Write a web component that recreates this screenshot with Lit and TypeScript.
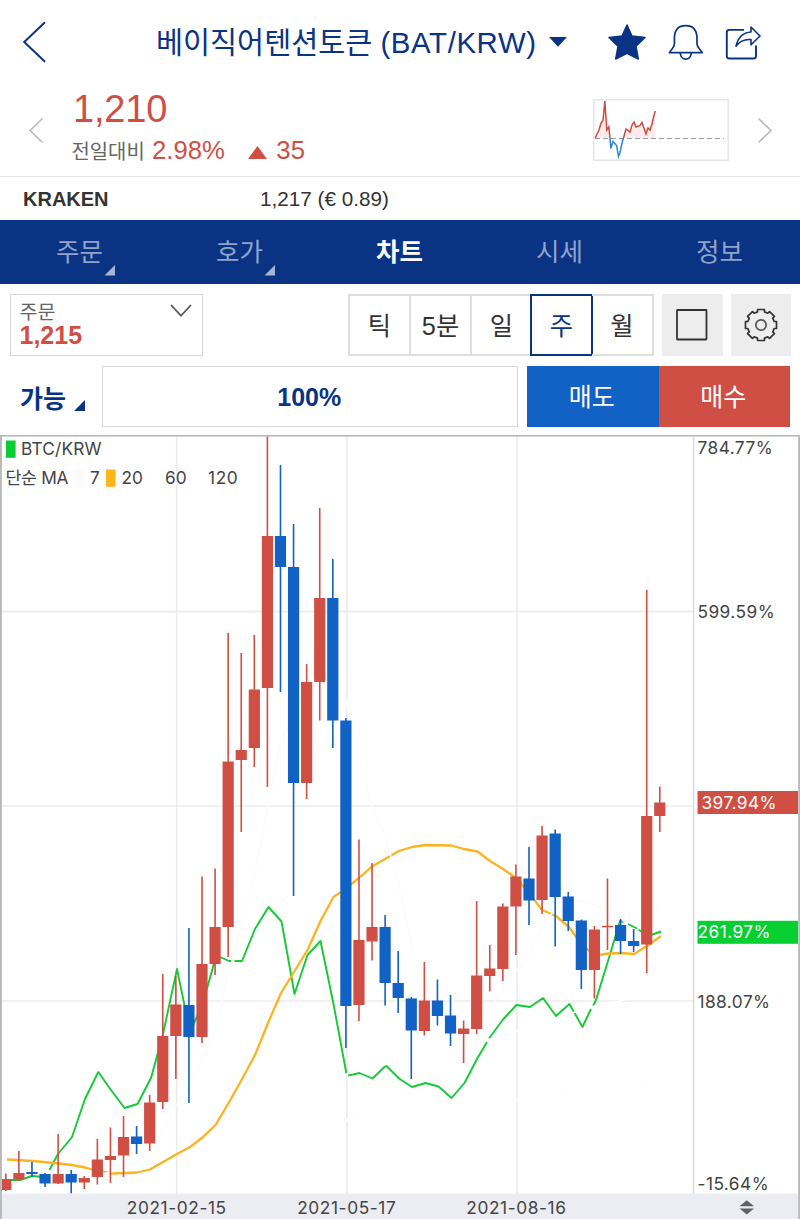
import { LitElement, html, css, svg } from "lit";
import { customElement, property } from "lit/decorators.js";
import { classMap } from "lit/directives/class-map.js";

type Candle = [dir: "u" | "d", high: number, top: number, bottom: number, low: number];

const CANDLES: Candle[] = [
  ["u", 1173.5, 1179, 1190, 1191], ["u", 1151, 1173, 1179.5, 1181], ["d", 1162, 1172, 1174, 1177],
  ["d", 1173, 1174, 1183.5, 1187], ["u", 1134, 1174, 1183.5, 1184], ["d", 1170, 1174, 1182.5, 1193.5],
  ["u", 1176, 1178, 1182.5, 1189], ["u", 1139, 1159.5, 1177, 1184.5], ["u", 1127.5, 1156, 1160, 1183],
  ["u", 1116, 1137, 1155.5, 1177], ["d", 1126, 1136.5, 1144, 1154], ["u", 1095, 1102.5, 1143.5, 1151],
  ["u", 974, 1036, 1102, 1109], ["u", 976, 1004.5, 1036, 1079], ["d", 928, 1005, 1037, 1103],
  ["u", 876.5, 964, 1037, 1043], ["u", 868.5, 927, 964, 975], ["u", 633, 761.5, 927, 957],
  ["u", 653, 750, 760, 832], ["u", 635, 689.5, 748, 767], ["u", 436, 536, 688, 787],
  ["d", 465, 536, 567, 692], ["d", 524, 567, 783, 896], ["u", 664, 682, 783, 799],
  ["u", 508, 598, 682, 720.5], ["d", 559, 598, 720.5, 748], ["d", 718, 720.5, 1006, 1048],
  ["u", 839.5, 940, 1005, 1021], ["u", 863, 927, 941.5, 960.5], ["d", 915, 927, 983, 1005.5],
  ["d", 951, 983, 998, 1013], ["d", 997, 998.5, 1030.5, 1079], ["u", 962, 1000.5, 1031, 1035.5],
  ["d", 979.5, 1000.5, 1016, 1025.5], ["d", 995, 1015.5, 1033.5, 1046], ["u", 1020.5, 1028.5, 1034, 1063],
  ["u", 901, 975.5, 1029, 1034], ["u", 945, 968.5, 976, 991.5], ["u", 903.5, 906.5, 969, 981],
  ["u", 864.5, 876.5, 906.5, 955], ["d", 847, 878.5, 900.5, 925], ["u", 826, 835.5, 900, 914],
  ["d", 829.5, 833.5, 897, 946.5], ["d", 892, 896.5, 921, 931], ["d", 919.5, 920.5, 970, 989],
  ["u", 926, 929.5, 970, 998.5], ["u", 878.5, 925.8, 927.2, 950], ["d", 919, 925, 941, 954],
  ["d", 929, 941, 946, 952], ["u", 590, 816, 944.5, 973], ["u", 786.5, 802.5, 816, 832],
];

const candleX = (i: number) => 5.8 + i * 13.08;

const MA20 =
  "7,1159.5 33,1161 59,1163.5 72,1165 85,1167.5 98,1171 112,1173.5 137,1172.5 150,1169.5 163,1162 177,1154 190,1147 203,1137 215.5,1125 228,1104 241,1081 255,1055 268,1023 281,993 294,972 308,949 320.5,921 333.5,897 341,892 359,878 372,866.5 385,859 399,851 412,847 425,845 451,845.5 464,849 477.5,851.5 490,861 503,869 516,878 529,893 542,910 556,916 569,927 582,945 595,955.5 608,953.5 621,953 634,954 647,946 661,936";
const BTC = [
  "5,1180 20,1180 32,1176 45,1177",
  "49.5,1170 58,1154 72,1137 85,1099 98.3,1072 111,1090 124.5,1108 137.5,1104 151,1078 163,1034 177,969 190,1032 203,1003 216,956 221,957.5 229,961 232,961",
  "234.5,961 242,961 255,929 268.5,907 281.5,921.5 294.5,994 307.5,955 320.5,941 333.5,1004 346.5,1074",
  "348,1075.5 359.5,1073 372.5,1078.5 386,1065.5 399,1078.5 412,1087 425.5,1083 438.5,1086.5 451.5,1098 464.5,1083 477,1059 487,1042",
  "489,1038.5 503,1019.5 516.5,1005 530,1007 543,998 556,1016 569.5,1004 582.5,1027 591,1009",
  "593,1006 596,1000 608,961 620,921 624,922",
  "628,924 637,928.5 648,936 661,931.5",
];

const sma = (n: number) => {
  const closes = CANDLES.map(([d, , t, b]) => (d === "u" ? t : b));
  return closes
    .map((_, i) => (i < n - 1 ? "" : `${candleX(i)},${closes.slice(i - n + 1, i + 1).reduce((a, b) => a + b) / n}`))
    .filter(Boolean)
    .join(" ");
};

@customElement("weekly-chart")
class WeeklyChart extends LitElement {
  static styles = css`
    :host { display: block; }
    svg { display: block; font-family: Inter, "Noto Sans CJK KR", sans-serif; font-size: 17.3px; fill: #444; }
    .grid { stroke: #ececec; stroke-width: 1.6; }
    .frame { fill: #b9b9b9; }
    .axis { fill: #ecedf2; }
    .u { fill: #d04f45; }
    .d { fill: #1261c4; }
    .line { fill: none; stroke-width: 1.9; stroke-linejoin: round; }
    .btc { stroke: #15c937; }
    .ma20 { stroke: #fbb420; stroke-width: 2.3; }
    .faint { stroke: #fcfcfc; stroke-width: 1.8; }
    .fainter { stroke: #fefefe; }
    .price { letter-spacing: 0.45px; }
    .tag { fill: #fff; }
    .green { fill: #06cf31; }
    .orange { fill: #fdb61a; }
    .pale { fill: #fbfbfb; }
    .scale { fill: #606164; }
    .date { font-size: 17.3px; letter-spacing: 0.6px; }
  `;

  render() {
    return html`<svg width="800" height="784" viewBox="0 435 800 784">
      <g class="grid">
        ${[176.7, 346.9, 517].map((x) => svg`<line x1=${x} x2=${x} y1="436" y2="1194" />`)}
        ${[611.6, 806, 1001].map((y) => svg`<line x1="2" x2="693" y1=${y} y2=${y} />`)}
      </g>
      <rect x="692.8" y="436" width="1.6" height="758" fill="#dcdcdc" />
      ${BTC.map((p) => svg`<polyline class="line btc" points=${p} />`)}
      <polyline class="line ma20" points=${MA20} />
      <polyline class="line faint" points=${sma(7)} />
      <polyline class="line faint fainter" points="330,1078 487,1040 517,1031 575,1012 591,1007 620,1001 661,990" />
      <polyline class="line faint fainter" points="330,1122 347,1120 517,1100 661,1085" />
      ${CANDLES.map(([dir, hi, top, bottom, lo], i) => {
        const x = candleX(i);
        const left = Math.max(2, x - 5.6);
        return svg`<g class=${dir}>
          <rect x=${x - 0.8} y=${hi} width="1.6" height=${lo - hi} />
          <rect x=${left} y=${top} width=${x + 5.6 - left} height=${bottom - top} />
        </g>`;
      })}
      <rect class="axis" x="0" y="1193.6" width="800" height="26" />
      <rect class="frame" x="0" y="435" width="800" height="1.6" />
      <rect class="frame" x="0" y="435" width="1.9" height="784" />
      <rect class="frame" x="798.2" y="435" width="1.8" height="784" />

      <rect class="green" x="6" y="440.5" width="9.6" height="17.3" />
      <text x="21" y="455" letter-spacing=".15">BTC/KRW</text>
      <text x="5.5" y="484" letter-spacing="-.3">단순 MA</text>
      <rect class="pale" x="75" y="469.5" width="9.6" height="17.3" />
      <text x="90" y="484">7</text>
      <rect class="orange" x="106" y="469.5" width="9.6" height="17.3" />
      <text x="121.5" y="484">20</text>
      <text x="165" y="484">60</text>
      <text x="208" y="484" letter-spacing=".6">120</text>

      <rect class="u" x="697.5" y="791" width="100.5" height="23" />
      <rect class="green" x="697.5" y="920.8" width="100.5" height="23" />
      <g class="price">
        <text x="697.5" y="454">784.77%</text>
        <text x="697.5" y="618">599.59%</text>
        <text class="tag" x="701.5" y="809">397.94%</text>
        <text class="tag" x="697.5" y="938">261.97%</text>
        <text x="697.5" y="1007.5">188.07%</text>
        <text x="697.5" y="1190">-15.64%</text>
      </g>
      <text class="date" x="126.8" y="1214">2021-02-15</text>
      <text class="date" x="297.2" y="1214">2021-05-17</text>
      <text class="date" x="466.3" y="1214">2021-08-16</text>
      <path class="scale" d="M739.5 1206.3L746.8 1200.3L754 1206.3ZM739.5 1208.4H754L746.8 1214.6Z" />
    </svg>`;
  }
}

@customElement("quote-header")
class QuoteHeader extends LitElement {
  static styles = css`
    :host { display: block; height: 220px; }
    svg { display: block; flex: none; }
    .bar { display: flex; align-items: center; height: 84px; padding-left: 22px; color: #0a3384; }
    .title { margin-left: 109px; width: 383px; font-size: 29.4px; line-height: 40px; white-space: nowrap; padding-top: 2px; }
    .pair { letter-spacing: 0.6px; }
    .caret { margin-left: 10px; }
    .star { margin-left: 41px; }
    .bell { margin-left: 22px; }
    .share { margin-left: 21px; }
    .quote { display: flex; height: 92px; border-bottom: 1.5px solid #e8e8e8; box-sizing: content-box; }
    .prev { margin: 33px 0 0 28px; }
    .numbers { margin-left: 27.5px; width: 521.5px; color: #d04f45; }
    .price { font-size: 38px; line-height: 44px; padding: 3px 0 0 1.5px; letter-spacing: -0.2px; }
    .change { display: flex; align-items: baseline; font-size: 25.7px; line-height: 36px; padding-top: 0.5px; }
    .label { font-size: 19.9px; color: #666; width: 80.5px; }
    .arrow { margin: 0 9px 0 23.5px; }
    .thumb { margin-top: 15px; }
    .next { margin: 33px 0 0 28px; }
    .foreign { display: flex; height: 42.5px; line-height: 44px; font-size: 20.7px; color: #333; padding-left: 23px; }
    .market { width: 237px; font-weight: bold; font-size: 20px; }
  `;

  render() {
    return html`
      <div class="bar">
        <svg width="25" height="42" viewBox="0 0 25 42" fill="none" stroke="#0a3384" stroke-width="2"><path d="M23 1.2L2.2 21L23 40.8" /></svg>
        <div class="title">베이직어텐션토큰 <span class="pair">(BAT/KRW)</span></div>
        <svg class="caret" width="18" height="10" viewBox="0 0 18 10"><path d="M0 0H18L9 9.7Z" fill="#0a3384" /></svg>
        <svg class="star" width="38" height="36" viewBox="0 0 38 36"><path d="M19 1L24 12L37 13.5L28 22.3L30.3 35L19 29.3L7.7 35L10 22.3L1 13.5L14 12Z" fill="#0a3384" stroke="#0a3384" stroke-width="1.5" stroke-linejoin="round" /></svg>
        <svg class="bell" width="36" height="37" viewBox="0 0 36 37" fill="none" stroke="#0a3384" stroke-width="1.7" stroke-linejoin="round">
          <path d="M17.7 1.7C10 1.7 6.6 7 6.4 14V20C6.2 24 3 25.6 1.4 28.7H34.2C32.8 25.6 29.2 24 29 20V14C28.8 7 25.4 1.7 17.7 1.7Z" />
          <path d="M12.2 29C12.8 37.2 22.8 37.2 23.3 29" />
        </svg>
        <svg class="share" width="37" height="37" viewBox="0 0 37 37" fill="none" stroke="#0a3384" stroke-width="1.9" stroke-linejoin="round">
          <path d="M19 5.9H4.3Q1.8 5.9 1.8 8.4V32Q1.8 34.5 4.3 34.5H28.5Q31 34.5 31 32V21.5" />
          <path d="M11 22.2C13 13.5 18 8.5 26 8V3L35 12L26 20.8V15.6C20 15 15.2 16.8 11 22.2Z" stroke-width="1.6" />
        </svg>
      </div>
      <div class="quote">
        <svg class="prev" width="16" height="27" viewBox="0 0 16 27" fill="none" stroke="#bbb" stroke-width="1.7"><path d="M14.5 1.5L2 13.5L14.5 25.5" /></svg>
        <div class="numbers">
          <div class="price">1,210</div>
          <div class="change">
            <span class="label">전일대비</span><span>2.98%</span>
            <svg class="arrow" width="19" height="13" viewBox="0 0 19 13"><path d="M0 13L9.5 0L19 13Z" fill="#d04f45" /></svg>
            <span>35</span>
          </div>
        </div>
        <svg class="thumb" width="136" height="62" viewBox="0 0 136 62" fill="none">
          <rect x=".8" y=".8" width="134.4" height="60.4" stroke="#e3e5e5" stroke-width="1.4" />
          <path d="M2.5 39L6 31L8 24L10 20L12 2L14 31L16.5 29L17.5 39Z" fill="#fdeceb" />
          <path d="M30 39L33 30L37 32L41 24L44 28L49 25L53 35L57 30L62 12V39Z" fill="#fdeceb" />
          <path d="M2 39.5H131" stroke="#999" stroke-width="1.1" stroke-dasharray="5 3" />
          <path d="M2.3 39L4 35L6 31L8 24L10 21.5L11.8 2L13.8 31L15.8 28L17 39" stroke="#cf4a42" stroke-width="1.5" />
          <path d="M17 39L17.8 49.5L20 42.5L23.6 46.5L25.5 57.5L27 53.5L29 44L30.5 39" stroke="#3284d4" stroke-width="1.5" />
          <path d="M30.5 39L33 30L37 33L39 26L41 23L43 28L47 26.5L49 23.5L53 35L55 29L57 31L59 25L60.5 18L62.3 12" stroke="#cf4a42" stroke-width="1.5" />
        </svg>
        <svg class="next" width="16" height="27" viewBox="0 0 16 27" fill="none" stroke="#bbb" stroke-width="1.7"><path d="M1.5 1.5L14 13.5L1.5 25.5" /></svg>
      </div>
      <div class="foreign"><span class="market">KRAKEN</span><span>1,217 (€ 0.89)</span></div>
    `;
  }
}

@customElement("section-tabs")
class SectionTabs extends LitElement {
  @property({ attribute: false }) tabs = [
    { name: "주문", menu: true },
    { name: "호가", menu: true },
    { name: "차트", active: true },
    { name: "시세" },
    { name: "정보" },
  ] as { name: string; menu?: boolean; active?: boolean }[];

  static styles = css`
    :host { display: grid; grid-template-columns: repeat(5, 1fr); height: 64px; background: #0a3384; }
    .tab { display: flex; justify-content: center; position: relative; font-size: 25.5px; line-height: 65px; color: #8fa3cb; padding-right: 1px; }
    .active { color: #fff; font-weight: bold; }
    .corner { position: absolute; right: 45px; bottom: 9.5px; width: 10.5px; height: 10.5px; background: #a5b5d6; clip-path: polygon(100% 0, 100% 100%, 0 100%); }
  `;

  render() {
    return this.tabs.map(
      (t) => html`<div class=${classMap({ tab: true, active: !!t.active })}>${t.name}${t.menu ? html`<i class="corner"></i>` : ""}</div>`
    );
  }
}

const GEAR = (() => {
  const pts: string[] = [];
  for (let i = 0; i < 8; i++) {
    const at = (deg: number, r: number) => {
      const a = ((i * 45 + deg) * Math.PI) / 180;
      return `${(17 + r * Math.sin(a)).toFixed(2)} ${(17 - r * Math.cos(a)).toFixed(2)}`;
    };
    pts.push(`${i ? "L" : "M"}${at(-12.5, 15.9)}L${at(12.5, 15.9)}L${at(15, 13.6)}L${at(30, 13.6)}`);
  }
  return pts.join("") + "Z";
})();

@customElement("order-tools")
class OrderTools extends LitElement {
  static styles = css`
    :host { display: block; height: 151px; box-sizing: border-box; padding: 10px 9px 0 10px; }
    .row { display: flex; height: 62px; margin-bottom: 9.5px; }
    .order { box-sizing: border-box; width: 193px; height: 61.5px; border: 1.6px solid #d8d8d8; display: flex; justify-content: space-between; padding: 6px 10px 0 8.5px; }
    .kind { font-size: 19.7px; line-height: 22px; color: #666; }
    .value { font-size: 25px; line-height: 25px; font-weight: bold; color: #d04f45; }
    .chevron { margin-top: 3px; display: block; }
    .periods { display: grid; grid-template-columns: repeat(5, 61px); margin-left: 145px; width: 306px; }
    .period { box-sizing: border-box; border: 2px solid #dedede; border-right-width: 0; font-size: 25.3px; line-height: 61px; text-align: center; color: #333; height: 62px; }
    .period:last-child { border-right-width: 2px; border-left-width: 0; margin-right: -1px; }
    .on { border: 2px solid #0a3384; color: #0a3384; margin: 0 -1px; }
    .tool { width: 60.5px; height: 61.5px; background: #ededed; display: flex; align-items: center; justify-content: center; margin-left: 8px; }
    .able { width: 92px; display: flex; align-items: flex-start; color: #0a3384; font-weight: bold; font-size: 25px; line-height: 67px; box-sizing: border-box; padding-left: 10px; }
    .corner { width: 11px; height: 11px; background: #0a3384; clip-path: polygon(100% 0, 100% 100%, 0 100%); margin: 34.5px 0 0 8px; }
    .ratio { box-sizing: border-box; width: 416px; height: 61.5px; border: 1.6px solid #d8d8d8; text-align: center; font-size: 25px; line-height: 61px; font-weight: bold; color: #0a3384; padding-right: 1.5px; }
    .trade { width: 131.5px; height: 61.5px; line-height: 62px; font-size: 25px; color: #fff; text-align: center; box-sizing: border-box; padding-right: 2px; }
    .sell { background: #1261c4; margin-left: 9px; }
    .buy { background: #d04f45; }
  `;

  render() {
    return html`
      <div class="row">
        <div class="order">
          <div><div class="kind">주문</div><div class="value">1,215</div></div>
          <svg class="chevron" width="22" height="14" viewBox="0 0 22 14" fill="none" stroke="#555" stroke-width="1.8"><path d="M1 1L11 11.8L21 1" /></svg>
        </div>
        <div class="periods">
          ${["틱", "5분", "일", "주", "월"].map((p) => html`<div class=${classMap({ period: true, on: p === "주" })}>${p}</div>`)}
        </div>
        <div class="tool">
          <svg width="32" height="32" viewBox="0 0 32 32" fill="none" stroke="#333" stroke-width="1.8"><rect x="1" y="1" width="29.5" height="29.5" rx=".5" /></svg>
        </div>
        <div class="tool">
          <svg width="34" height="34" viewBox="0 0 34 34" fill="none" stroke="#333" stroke-width="1.7" stroke-linejoin="round"><path d=${GEAR} /><circle cx="17" cy="17" r="5.2" stroke="#555" /></svg>
        </div>
      </div>
      <div class="row">
        <div class="able">가능<i class="corner"></i></div>
        <div class="ratio">100%</div>
        <div class="trade sell">매도</div>
        <div class="trade buy">매수</div>
      </div>
    `;
  }
}

@customElement("app-root")
class AppRoot extends LitElement {
  static styles = css`
    :host { display: block; width: 800px; height: 1219px; overflow: hidden; background: #fff; font-family: "Liberation Sans", "Noto Sans CJK KR", sans-serif; }
  `;

  render() {
    return html`<quote-header></quote-header><section-tabs></section-tabs><order-tools></order-tools><weekly-chart></weekly-chart>`;
  }
}
